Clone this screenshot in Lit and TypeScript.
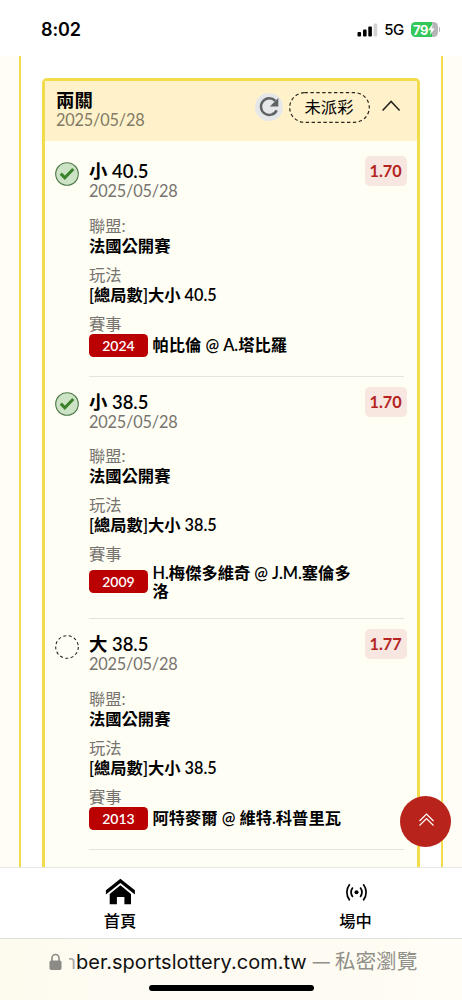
import { LitElement, html, css } from "lit";
import { customElement, property } from "lit/decorators.js";

interface Leg {
  won: boolean;
  pick: string;
  odds: string;
  line: string;
  code: string;
  match: string;
}

const LEGS: Leg[] = [
  { won: true, pick: "小 40.5", odds: "1.70", line: "[總局數]大小 40.5", code: "2024", match: "帕比倫 @ A.塔比羅" },
  { won: true, pick: "小 38.5", odds: "1.70", line: "[總局數]大小 38.5", code: "2009", match: "H.梅傑多維奇 @ J.M.塞倫多洛" },
  { won: false, pick: "大 38.5", odds: "1.77", line: "[總局數]大小 38.5", code: "2013", match: "阿特麥爾 @ 維特.科普里瓦" },
];

@customElement("status-bar")
class StatusBar extends LitElement {
  static styles = css`
    :host { display: flex; align-items: center; height: 56px; padding: 3px 23px 0 41px; box-sizing: border-box; background: #fff; font-family: Inter, sans-serif; color: #000; }
    .time { flex: 1; font-size: 18px; font-weight: 600; line-height: 22px; letter-spacing: -0.1px; }
    .signal { display: block; margin-right: 6px; }
    .net { font-size: 15px; line-height: 20px; font-weight: 500; letter-spacing: -0.6px; margin-right: 7px; }
    .battery { display: flex; align-items: center; justify-content: center; width: 27px; height: 15.5px; border-radius: 4.5px; background: linear-gradient(90deg, #34c759 79%, #b5b5b7 79%); color: #fff; font-size: 13px; font-weight: 700; letter-spacing: -0.5px; }
    .cap { width: 1.5px; height: 5px; margin-left: 1px; border-radius: 0 2px 2px 0; background: #b5b5b7; margin-right: -1px; }
  `;
  render() {
    return html`
      <span class="time">8:02</span>
      <svg class="signal" width="21" height="14" viewBox="0 0 21 14">
        <rect x="0.5" y="9" width="3.6" height="4.5" rx="1" />
        <rect x="6" y="6.5" width="3.6" height="7" rx="1" />
        <rect x="11.3" y="3.5" width="3.6" height="10" rx="1" />
        <rect x="16.6" y="0.5" width="3.6" height="13" rx="1" fill="#d2d2d4" />
      </svg>
      <span class="net">5G</span>
      <span class="battery">79<svg width="7" height="11" viewBox="0 0 7 11"><path d="M4.6 0 .3 6.2h2.6L2 11 6.7 4.6H4z" fill="#fff" /></svg></span>
      <span class="cap"></span>
    `;
  }
}

@customElement("bet-leg")
class BetLeg extends LitElement {
  @property({ attribute: false }) leg!: Leg;
  static styles = css`
    :host { display: grid; grid-template-columns: 24px 1fr; column-gap: 10px; padding: 0 12.9px 0 10px; font-family: Lato, "Noto Sans CJK TC", sans-serif; font-size: 16.3px; line-height: 20px; }
    .state { display: block; margin-top: 15.5px; }
    .body { border-bottom: 1px solid #e6e3df; padding: 15px 0 19px; }
    .top { display: flex; justify-content: space-between; height: 54.5px; margin-right: -2.5px; }
    .pick { font-size: 18.4px; font-weight: 600; line-height: 20px; }
    .date { color: #77746f; line-height: 19px; letter-spacing: -0.17px; }
    .odds { box-sizing: border-box; width: 42px; height: 30px; margin-top: -5px; border-radius: 5px; background: #f8e7e1; color: #b3241e; font-size: 16.3px; font-weight: 700; line-height: 30px; text-align: center; }
    .field { margin-top: 9px; }
    .label { color: #77746f; }
    .value { font-weight: 600; }
    .match { display: flex; align-items: center; gap: 4.5px; margin-right: 47px; font-weight: 600; line-height: 17.6px; }
    .code { flex: none; width: 59px; height: 23px; border-radius: 4.5px; background: #ba0000; color: #fff; text-align: center; font-size: 14px; line-height: 23px; }
  `;
  render() {
    const l = this.leg;
    return html`
      ${l.won
        ? html`<svg class="state" width="24" height="24" viewBox="0 0 24 24" fill="none">
            <circle cx="12" cy="12" r="11.3" fill="#cde3c6" stroke="#4f7a4a" stroke-width="1.1" />
            <path d="m5.8 11.6 4 4.2L18.3 7" stroke="#3a8229" stroke-width="3" />
          </svg>`
        : html`<svg class="state" width="24" height="24" viewBox="0 0 24 24" fill="none">
            <circle cx="12" cy="12" r="11.3" stroke="#222" stroke-width="1.1" stroke-dasharray="3 2.46" />
          </svg>`}
      <div class="body">
        <div class="top">
          <div>
            <div class="pick">${l.pick}</div>
            <div class="date">2025/05/28</div>
          </div>
          <div class="odds">${l.odds}</div>
        </div>
        <div class="label">聯盟:</div>
        <div class="value">法國公開賽</div>
        <div class="field">
          <div class="label">玩法</div>
          <div class="value">${l.line}</div>
        </div>
        <div class="field">
          <div class="label">賽事</div>
          <div class="match"><span class="code">${l.code}</span><span>${l.match}</span></div>
        </div>
      </div>
    `;
  }
}

@customElement("bet-slip")
class BetSlip extends LitElement {
  static styles = css`
    :host { display: block; box-sizing: border-box; border: 3px solid #f2dc4c; border-bottom: 0; border-radius: 5px 5px 0 0; background: #fffef5; font-family: Lato, "Noto Sans CJK TC", sans-serif; height: 100%; }
    .head { display: flex; align-items: center; height: 60px; box-sizing: border-box; padding: 0 16.5px 8px 11px; background: #fff2cb; }
    .name { flex: 1; padding-top: 5.5px; }
    .title { font-size: 18.4px; font-weight: 700; line-height: 20px; }
    .date { font-size: 16.3px; line-height: 19px; color: #827a66; letter-spacing: -0.17px; }
    .reload { display: block; margin-right: 6px; }
    .pill { display: grid; place-items: center; width: 81px; height: 31px; margin-right: 12px; font-size: 16.3px; line-height: 20px; }
    .outline, .word { grid-area: 1 / 1; }
    .legs { padding-top: 5px; }
  `;
  render() {
    return html`
      <div class="head">
        <div class="name">
          <div class="title">兩關</div>
          <div class="date">2025/05/28</div>
        </div>
        <svg class="reload" width="28" height="28" viewBox="0 0 28 28" fill="none">
          <circle cx="14" cy="14" r="14" fill="#e5e7e8" />
          <path d="M20.3 7.9A8.3 8.3 0 1 0 21.7 17.4" stroke="#606366" stroke-width="2.5" />
          <path d="M23.3 5v8.6H14.8z" fill="#606366" />
        </svg>
        <div class="pill">
          <svg class="outline" width="81" height="31" viewBox="0 0 81 31" fill="none">
            <rect x=".7" y=".7" width="79.6" height="29.6" rx="14.8" stroke="#29261e" stroke-width="1.2" stroke-dasharray="3.4 2.5" />
          </svg>
          <span class="word">未派彩</span>
        </div>
        <svg width="19" height="14" viewBox="0 0 19 14" fill="none"><path d="m.6 10.5 8.5-9 8.5 9" stroke="#29261e" stroke-width="1.6" /></svg>
      </div>
      <div class="legs">${LEGS.map((l) => html`<bet-leg .leg=${l}></bet-leg>`)}</div>
    `;
  }
}

@customElement("tab-bar")
class TabBar extends LitElement {
  static styles = css`
    :host { display: grid; grid-template-columns: 1fr 1fr; box-sizing: border-box; height: 72px; border-top: 1px solid #e8e7e5; border-bottom: 1px solid #e2e0dc; background: #fff; font: 500 16.3px/20px "Noto Sans CJK TC", sans-serif; color: #000; }
    .tab { display: flex; flex-direction: column; align-items: center; padding-top: 10px; }
    .home { padding-left: 9px; }
    .live { padding-left: 18px; }
    .icon { display: block; height: 28px; margin-bottom: 4px; }
  `;
  render() {
    return html`
      <div class="tab home">
        <svg class="icon" width="30" height="28" viewBox="0 0 30 28">
          <path d="M.9 12.3 15.4.7l14.5 11.6v4.2L15.4 4.9.9 16.5z" />
          <path d="M15.4 7.2 26 16v10.2h-6.6v-7.2h-7.5v7.2H4.7V16z" />
        </svg>
        <span>首頁</span>
      </div>
      <div class="tab live">
        <svg class="icon" width="24" height="28" viewBox="0 0 24 28" fill="none" stroke="#000" stroke-width="1.7">
          <circle cx="12.5" cy="14.3" r="2" fill="#000" stroke="none" />
          <path d="M5.7 6.2a13 13 0 0 0 0 16.2M19.3 6.2a13 13 0 0 1 0 16.2M8.8 9.5a8 8 0 0 0 0 9.6M16.2 9.5a8 8 0 0 1 0 9.6" />
        </svg>
        <span>場中</span>
      </div>
    `;
  }
}

@customElement("address-bar")
class AddressBar extends LitElement {
  static styles = css`
    :host { display: flex; flex-direction: column; align-items: center; height: 61px; background: linear-gradient(90deg, #fdfaee, #fefcf2 20%, #fefcf2 80%, #fffdf6); font-family: Inter, "Noto Sans CJK TC", sans-serif; }
    .row { display: flex; align-items: center; width: 100%; box-sizing: border-box; height: 46px; padding-left: 49px; font-size: 20px; line-height: 24px; white-space: nowrap; color: #111; }
    .lock { display: block; margin-right: 7px; }
    .clip { display: flex; justify-content: flex-end; width: 7px; overflow: hidden; color: #aaa; }
    .host { letter-spacing: 0.02px; }
    .dash { margin-left: 6px; font-size: 17px; color: #918f89; }
    .mode { color: #918f89; margin-left: 5px; font-size: 20.7px; }
    .grip { width: 165px; height: 6px; border-radius: 3px; background: #000; }
  `;
  render() {
    return html`
      <div class="row">
        <svg class="lock" width="13" height="18" viewBox="0 0 13 18" fill="none">
          <path d="M3 8V5a3.5 3.5 0 0 1 7 0v3" stroke="#8b8a87" stroke-width="1.6" />
          <rect x=".5" y="7.5" width="12" height="9.5" rx="1.8" fill="#8b8a87" />
        </svg>
        <span class="clip">m</span><span class="host">ber.sportslottery.com.tw</span><span class="dash">—</span><span class="mode">私密瀏覽</span>
      </div>
      <div class="grip"></div>
    `;
  }
}

@customElement("app-root")
class AppRoot extends LitElement {
  static styles = css`
    :host { display: flex; flex-direction: column; position: relative; width: 462px; height: 1000px; overflow: hidden; background: #fffdf5; color: #000; }
    .page { flex: 1; min-height: 0; overflow: hidden; padding: 0 19px; }
    .panel { box-sizing: border-box; height: 100%; border: solid #f2dc4c; border-width: 0 2.6px; padding: 22px 21px 0; background: #fff; }
    .up { position: absolute; left: 400px; top: 796px; display: grid; place-items: center; width: 51px; height: 51px; box-sizing: border-box; padding: 0 0 4px 1px; border-radius: 50%; background: #b8241b; }
  `;
  render() {
    return html`
      <status-bar></status-bar>
      <div class="page"><div class="panel"><bet-slip></bet-slip></div></div>
      <tab-bar></tab-bar>
      <address-bar></address-bar>
      <div class="up">
        <svg width="17" height="15" viewBox="0 0 17 15" fill="none" stroke="#fff" stroke-width="1.2"><path d="m1.5 9 7-7 7 7M1.5 13.5l7-7 7 7" /></svg>
      </div>
    `;
  }
}
